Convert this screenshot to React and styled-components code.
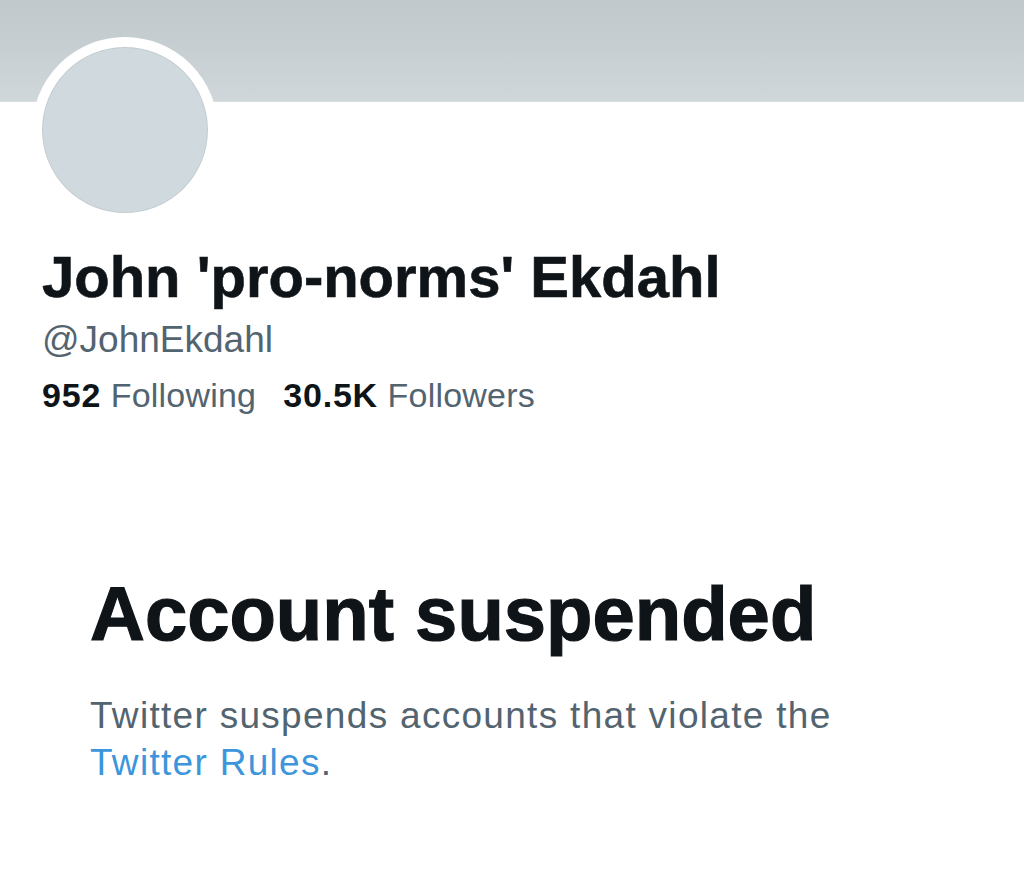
import React from "react";
import styled, { createGlobalStyle } from "styled-components";

const GlobalStyle = createGlobalStyle`
  html, body {
    margin: 0;
    padding: 0;
    background: #ffffff;
  }
  body {
    font-family: "Liberation Sans", Arial, sans-serif;
    color: #0f1419;
  }
`;

const Page = styled.div`
  width: 1024px;
  height: 896px;
  overflow: hidden;
  background: #ffffff;
`;

const Banner = styled.div`
  height: 101px;
  background: linear-gradient(180deg, #c1c8cc 0%, #c8cfd3 50%, #d0d7db 100%);
  border-bottom: 1px solid #d9dde0;
`;

const Profile = styled.div`
  padding: 0 42px;
`;

const Avatar = styled.div`
  width: 166px;
  height: 166px;
  margin: -65px 0 0 -10px;
  border: 10px solid #ffffff;
  border-radius: 50%;
  background: #cfd9de;
  box-shadow: inset 0 0 0 1px rgba(0, 0, 0, 0.06);
  position: relative;
`;

const Name = styled.h1`
  margin: 19px 0 0;
  font-size: 58px;
  line-height: 70px;
  font-weight: 700;
  -webkit-text-stroke: 0.6px #0f1419;
  color: #0f1419;
`;

const Handle = styled.div`
  margin-top: 6px;
  font-size: 37px;
  line-height: 44px;
  color: #536471;
`;

const Stats = styled.div`
  display: flex;
  gap: 27px;
  margin-top: 13px;
  font-size: 34px;
  line-height: 40px;
  letter-spacing: 0.2px;
`;

const Stat = styled.span`
  color: #536471;

  b {
    color: #0f1419;
    font-weight: 700;
    letter-spacing: 0.8px;
  }
`;

const Suspended = styled.section`
  padding: 0 90px;
  margin-top: 154px;
`;

const Title = styled.h2`
  margin: 0;
  font-size: 76px;
  line-height: 90px;
  font-weight: 700;
  -webkit-text-stroke: 1.2px #0f1419;
  color: #0f1419;
`;

const Message = styled.p`
  margin: 33px 0 0;
  max-width: 780px;
  font-size: 37px;
  line-height: 47px;
  letter-spacing: 1.3px;
  color: #536471;
`;

const RulesLink = styled.a`
  color: #3d95dc;
  text-decoration: none;
`;

export default function App() {
  return (
    <Page>
      <GlobalStyle />
      <Banner />
      <Profile>
        <Avatar />
        <Name>John 'pro-norms' Ekdahl</Name>
        <Handle>@JohnEkdahl</Handle>
        <Stats>
          <Stat>
            <b>952</b> Following
          </Stat>
          <Stat>
            <b>30.5K</b> Followers
          </Stat>
        </Stats>
      </Profile>
      <Suspended>
        <Title>Account suspended</Title>
        <Message>
          Twitter suspends accounts that violate the{" "}
          <RulesLink href="#">Twitter Rules</RulesLink>.
        </Message>
      </Suspended>
    </Page>
  );
}
